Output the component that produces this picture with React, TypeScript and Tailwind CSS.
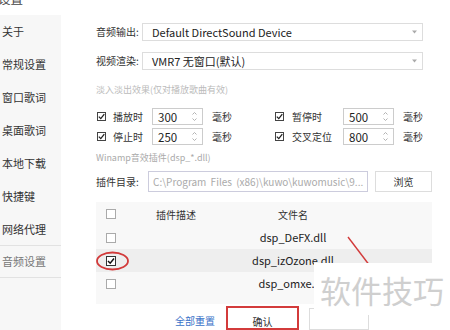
import React from "react";

function Check({ checked = true }: { checked?: boolean }) {
  return (
    <div className="w-[9px] h-[9px] border border-[#444] bg-white flex items-center justify-center shrink-0">
      {checked && (
        <svg width="7" height="7" viewBox="0 0 7 7">
          <path d="M0.8 3.6 L2.8 5.6 L6.3 1.2" stroke="#222" strokeWidth="1.3" fill="none" />
        </svg>
      )}
    </div>
  );
}

function TableCheck({ checked = false }: { checked?: boolean }) {
  return (
    <div
      className={
        checked
          ? "w-[10px] h-[10px] border border-[#333] bg-white flex items-center justify-center"
          : "w-[10px] h-[10px] border border-[#aaa] bg-white"
      }
    >
      {checked && (
        <svg width="8" height="8" viewBox="0 0 8 8">
          <path d="M1 4 L3.2 6.2 L7 1.6" stroke="#111" strokeWidth="1.5" fill="none" />
        </svg>
      )}
    </div>
  );
}

function Spin({ value }: { value: string }) {
  return (
    <div className="w-[51px] h-[17px] border border-[#ccc] bg-white flex items-center justify-between pl-[5px] pr-[5px] shrink-0">
      <span className="text-[11.5px] leading-none text-[#222] mt-[2px]">{value}</span>
      <svg width="5" height="11" viewBox="0 0 5 11">
        <path d="M0.5 3.5 L2.5 1.5 L4.5 3.5" stroke="#aaa" strokeWidth="0.9" fill="none" />
        <path d="M0.5 7.5 L2.5 9.5 L4.5 7.5" stroke="#aaa" strokeWidth="0.9" fill="none" />
      </svg>
    </div>
  );
}

function Select({ text }: { text: string }) {
  return (
    <div className="w-[281px] h-[18px] border border-[#ddd] bg-white flex items-center justify-between pl-[9px] pr-[5px]">
      <span className="text-[11px] leading-none text-[#222]">{text}</span>
      <svg width="5" height="4" viewBox="0 0 5 4">
        <path d="M0 0.5 L5 0.5 L2.5 3.5 Z" fill="#aaa" />
      </svg>
    </div>
  );
}

export default function App() {
  const side = ["关于", "常规设置", "窗口歌词", "桌面歌词", "本地下载", "快捷键"];
  const files = ["dsp_DeFX.dll", "dsp_izOzone.dll", "dsp_omxe.dll"];
  return (
    <div className="relative w-[450px] h-[330px] overflow-hidden bg-white text-[#333] font-['Noto_Sans_CJK_SC','Noto_Sans',sans-serif]">
      <div className="flex h-full">
        <aside className="w-[61px] shrink-0 flex flex-col">
          <div className="h-[15px] overflow-hidden bg-white">
            <div className="text-[12.5px] leading-none text-[#444] -mt-[7px] -ml-[2px]">设置</div>
          </div>
          <div className="flex-1 bg-[#f7f7f7] flex flex-col">
            {side.map((s) => (
              <div key={s} className="h-[33px] flex items-center pl-[2px] text-[11px]">
                {s}
              </div>
            ))}
            <div className="h-[33px] flex items-center pl-[2px] text-[11px] border-b border-[#e2e2e2]">网络代理</div>
            <div className="h-[32px] flex items-center pl-[2px] text-[11px] text-[#777] border-b border-[#e2e2e2]">音频设置</div>
          </div>
        </aside>

        <main className="pl-[35px] pt-[23px] w-[371px] flex flex-col">
          <div className="flex items-center h-[18px]">
            <span className="w-[46px] text-[10px] leading-none">音频输出:</span>
            <Select text="Default DirectSound Device" />
          </div>
          <div className="flex items-center h-[18px] mt-[11px]">
            <span className="w-[46px] text-[10px] leading-none">视频渲染:</span>
            <Select text="VMR7 无窗口(默认)" />
          </div>
          <div className="mt-[14px] text-[9px] leading-[12px] text-[#bbb]">淡入淡出效果(仅对播放歌曲有效)</div>

          <div className="mt-[12px] flex items-center h-[17px]">
            <div className="w-[179px] flex items-center">
              <div className="ml-[1px]"><Check /></div>
              <span className="ml-[7px] w-[39px] text-[10px] leading-none">播放时</span>
              <Spin value="300" />
              <span className="ml-[9px] text-[10px] leading-none">毫秒</span>
            </div>
            <div className="flex items-center">
              <Check />
              <span className="ml-[8px] w-[51px] text-[10px] leading-none">暂停时</span>
              <Spin value="500" />
              <span className="ml-[9px] text-[10px] leading-none">毫秒</span>
            </div>
          </div>
          <div className="mt-[3px] flex items-center h-[17px]">
            <div className="w-[179px] flex items-center">
              <div className="ml-[1px]"><Check /></div>
              <span className="ml-[7px] w-[39px] text-[10px] leading-none">停止时</span>
              <Spin value="250" />
              <span className="ml-[9px] text-[10px] leading-none">毫秒</span>
            </div>
            <div className="flex items-center">
              <Check />
              <span className="ml-[8px] w-[51px] text-[10px] leading-none">交叉定位</span>
              <Spin value="800" />
              <span className="ml-[9px] text-[10px] leading-none">毫秒</span>
            </div>
          </div>

          <div className="mt-[7px] text-[9px] leading-[12px] text-[#aaa]">Winamp音效插件(dsp_*.dll)</div>

          <div className="mt-[7px] flex items-center h-[21px]">
            <span className="w-[52px] text-[10px] leading-none">插件目录:</span>
            <div className="w-[220px] h-[21px] border border-[#ccd] flex items-center pl-[4px] overflow-hidden">
              <span className="text-[10px] leading-none text-[#aaa] whitespace-nowrap [word-spacing:2px]">
                C:\Program Files (x86)\kuwo\kuwomusic\9...
              </span>
            </div>
            <div className="ml-[7px] w-[57px] h-[21px] border border-[#ddd] bg-white flex items-center justify-center text-[10px]">浏览</div>
          </div>

          <div className="mt-[10px] w-[336px] h-[111px] bg-[#f8f8f8] flex flex-col">
            <div className="h-[24px] flex items-center">
              <div className="w-[22px] pl-[10px]"><TableCheck /></div>
              <div className="w-[116px] text-center text-[10px]">插件描述</div>
              <div className="w-[118px] text-center text-[10px]">文件名</div>
            </div>
            {files.map((f, i) => (
              <div key={f} className={i === 1 ? "h-[23px] flex items-center bg-[#eeeeee]" : "h-[23px] flex items-center"}>
                <div className="w-[22px] pl-[10px]"><TableCheck checked={i === 1} /></div>
                <div className="w-[116px]" />
                <div className="w-[118px] text-center text-[11px] text-[#222]">{f}</div>
              </div>
            ))}
          </div>

          <div className="mt-[2px] flex items-start">
            <span className="ml-[79px] mt-[10px] text-[10px] leading-none text-[#3a72c8]">全部重置</span>
            <div className="ml-[11px] w-[73px] h-[24px] border-2 border-[#d33b3b] flex justify-center pt-[9px] text-[10px] leading-none">确认</div>
            <div className="ml-[10px] mt-[2px] w-[60px] h-[22px] border border-[#ddd]" />
          </div>
        </main>
      </div>

      <svg className="absolute left-0 top-0 pointer-events-none" width="450" height="330">
        <line x1="348" y1="237" x2="370" y2="266" stroke="#d23a3a" strokeWidth="1.4" />
        <ellipse cx="112.5" cy="261" rx="15.5" ry="8.5" stroke="#d23a3a" strokeWidth="1.8" fill="none" />
      </svg>

      <div className="absolute left-[314px] top-[263px] w-[136px] h-[52px] bg-white flex items-center justify-center">
        <span className="text-[31px] leading-none text-[#cfcfcf]">软件技巧</span>
      </div>
    </div>
  );
}
